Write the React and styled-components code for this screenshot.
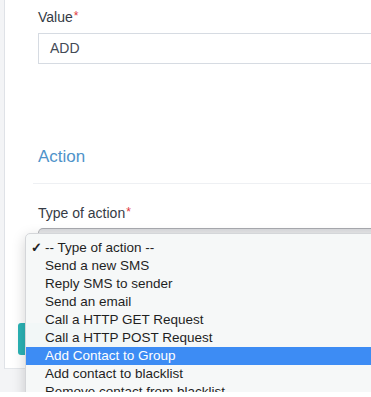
import React from "react";
import styled, { createGlobalStyle } from "styled-components";

const Global = createGlobalStyle`
  html, body { margin: 0; padding: 0; background: #ffffff; }
  body { font-family: "Liberation Sans", Arial, Helvetica, sans-serif; }
`;

const Page = styled.div`
  width: 371px;
  height: 392px;
  overflow: hidden;
  background: #f3f4f6;
  padding-left: 4px;
  box-sizing: border-box;
`;

const Card = styled.div`
  background: #ffffff;
  border-left: 1px solid #dfe2e7;
  border-bottom: 1px solid #e3e6ea;
  width: 420px;
  padding: 7px 0 13px 13px;
  box-sizing: border-box;
  display: flex;
  flex-direction: column;
`;

const Field = styled.div`
  display: flex;
  flex-direction: column;
  padding-left: 20px;
  margin-top: ${(p) => p.$top || 0}px;
  position: relative;
`;

const Label = styled.label`
  font-size: 14px;
  line-height: 20px;
  color: #353b45;
`;

const Req = styled.span`
  color: #e0383e;
  font-size: 12px;
  vertical-align: top;
  position: relative;
  top: -1px;
  margin-left: 1px;
`;

const Input = styled.div`
  margin-top: 6px;
  height: 31px;
  border: 1px solid #d6dbe2;
  box-sizing: border-box;
  padding-left: 11px;
  font-size: 14px;
  line-height: 29px;
  color: #434a56;
`;

const Heading = styled.h3`
  margin: 81px 0 0 0;
  padding-left: 20px;
  font-weight: 400;
  font-size: 17px;
  line-height: 24px;
  color: #4f93ca;
`;

const Divider = styled.hr`
  margin: 14px 0 0 15px;
  border: none;
  border-top: 1px solid #eef0f3;
`;

const Select = styled.div`
  margin-top: 5px;
  height: 32px;
  border-top: 1px solid #a8a9ae;
  border-left: 1px solid #b3b4b8;
  border-radius: 5px 0 0 5px;
  background: linear-gradient(#d9dadd, #e9eaec 4px, #f6f6f7 12px, #fbfbfb);
  box-sizing: border-box;
`;

const Menu = styled.ul`
  position: absolute;
  left: 7px;
  top: 30px;
  width: 400px;
  margin: 0;
  padding: 5px 0 0 0;
  list-style: none;
  background: rgba(246, 248, 248, 0.98);
  border: 1px solid #d4d6d9;
  border-radius: 5px 0 0 5px;
  box-shadow: 0 4px 14px rgba(0, 0, 0, 0.18);
  z-index: 5;
`;

const Item = styled.li`
  position: relative;
  height: 18px;
  line-height: 18px;
  padding-left: 19px;
  font-size: 13.5px;
  color: ${(p) => (p.$active ? "#ffffff" : "#1f1f1f")};
  background: ${(p) => (p.$active ? "#3d8cf4" : "transparent")};
  white-space: nowrap;
`;

const Check = styled.span`
  position: absolute;
  left: 5px;
  top: 0;
  font-size: 13px;
  font-weight: 700;
  color: #222;
`;

const Footer = styled.div`
  margin-top: 63px;
  display: flex;
`;

const Button = styled.button`
  height: 32px;
  width: 120px;
  border: none;
  border-radius: 3px;
  background: #2bb3b5;
  color: #fff;
  font-family: inherit;
  font-size: 14px;
`;

const options = [
  "-- Type of action --",
  "Send a new SMS",
  "Reply SMS to sender",
  "Send an email",
  "Call a HTTP GET Request",
  "Call a HTTP POST Request",
  "Add Contact to Group",
  "Add contact to blacklist",
  "Remove contact from blacklist",
];

export default function App() {
  return (
    <>
      <Global />
      <Page>
        <Card>
          <Field>
            <Label>
              Value<Req>*</Req>
            </Label>
            <Input>ADD</Input>
          </Field>
          <Heading>Action</Heading>
          <Divider />
          <Field $top={19}>
            <Label>
              Type of action<Req>*</Req>
            </Label>
            <Select />
            <Menu>
              {options.map((o, i) => (
                <Item key={o} $active={i === 6}>
                  {i === 0 && <Check>✓</Check>}
                  {o}
                </Item>
              ))}
            </Menu>
          </Field>
          <Footer>
            <Button>Save</Button>
          </Footer>
        </Card>
      </Page>
    </>
  );
}
